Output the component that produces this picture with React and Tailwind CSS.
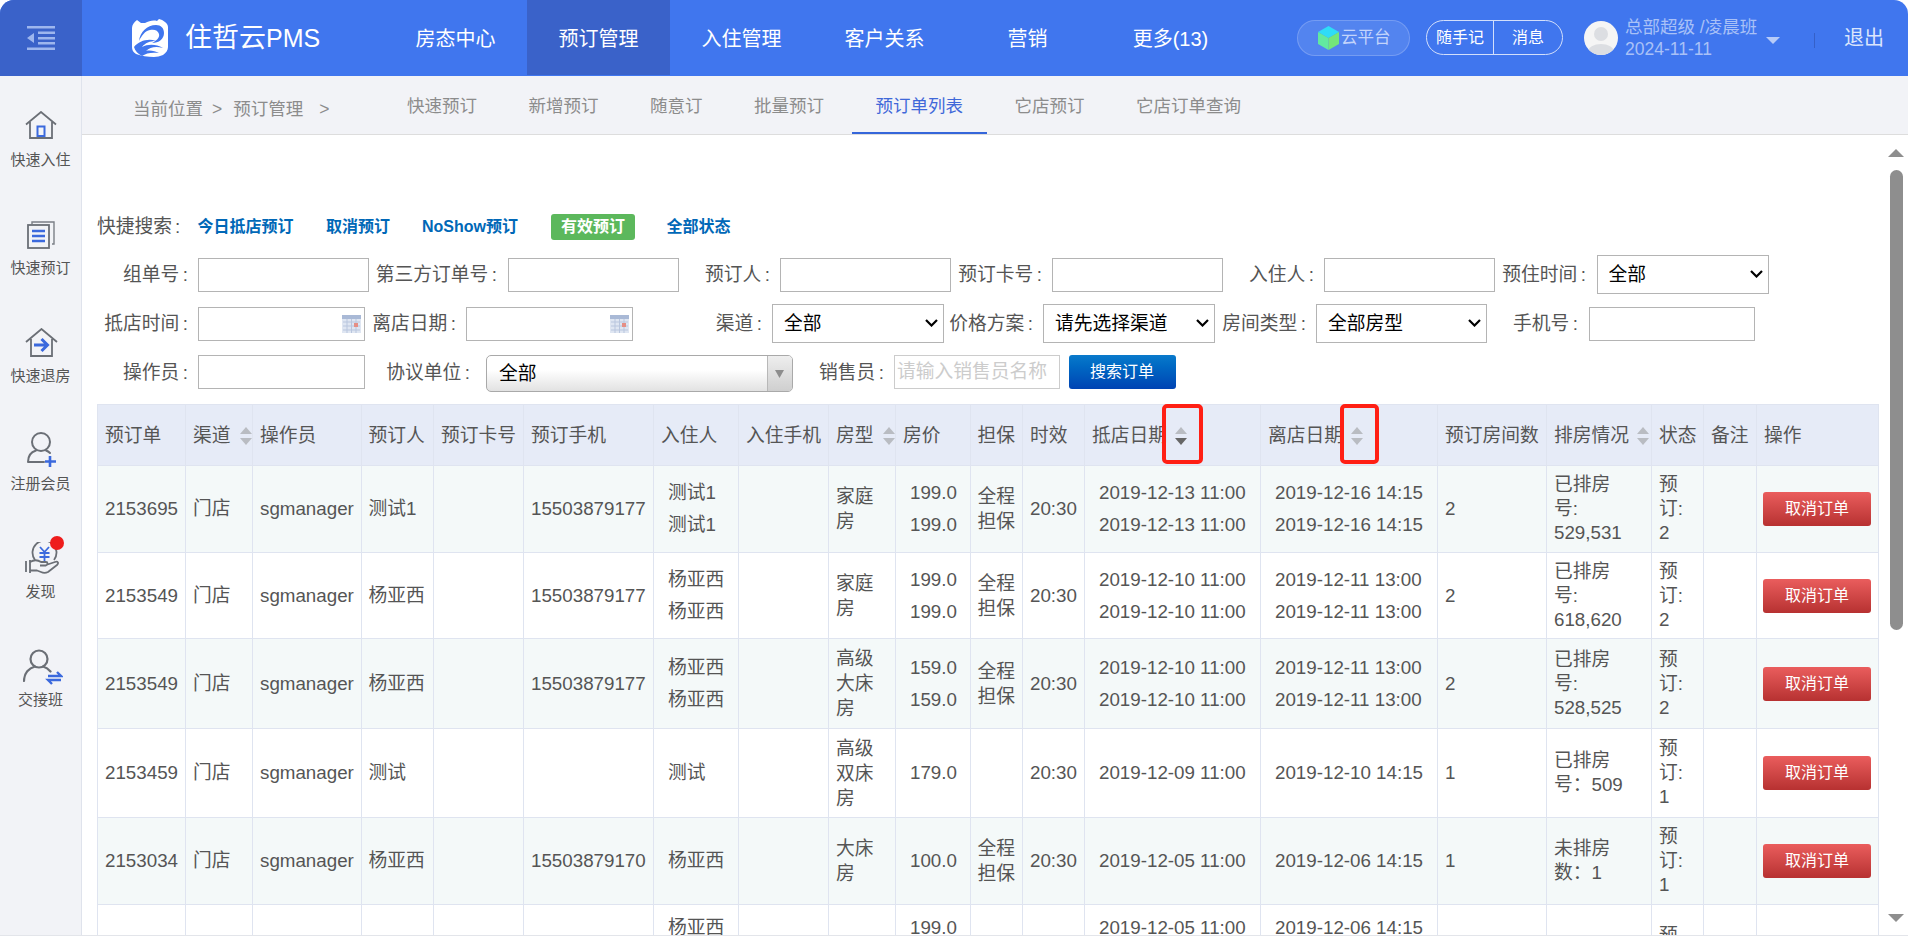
import React from 'react';

const NAV = ['房态中心', '预订管理', '入住管理', '客户关系', '营销', '更多(13)'];
const TABS = ['快速预订', '新增预订', '随意订', '批量预订', '预订单列表', '它店预订', '它店订单查询'];

function HomeIcon() {
  return (
    <svg width="32" height="28" viewBox="0 0 32 28" fill="none">
      <path d="M1 13.5 16 1l15 12.5M5 11v16h22V11" stroke="#6b6f76" strokeWidth="1.8" />
      <path d="M12.5 15.5h7V25h-7z" stroke="#3b69dd" strokeWidth="2" />
    </svg>
  );
}
function DocIcon() {
  return (
    <svg width="28" height="28" viewBox="0 0 28 28" fill="none">
      <path d="M5 3V1h22v22h-2" stroke="#7b7f86" strokeWidth="1.4" />
      <rect x="1" y="4" width="21" height="23" stroke="#6b6f76" strokeWidth="1.8" />
      <path d="M5 10h13M5 15h13M5 20h13" stroke="#3b69dd" strokeWidth="2.4" />
    </svg>
  );
}
function CheckoutIcon() {
  return (
    <svg width="33" height="29" viewBox="0 0 33 29" fill="none">
      <path d="M1 14 16.5 1 32 14M6 11v17h21V11" stroke="#6b6f76" strokeWidth="1.8" />
      <path d="M9 17h13M16.5 11l6 6-6 6" stroke="#3b69dd" strokeWidth="3" />
    </svg>
  );
}
function UserPlusIcon() {
  return (
    <svg width="29" height="35" viewBox="0 0 29 35" fill="none">
      <circle cx="14" cy="10" r="9" stroke="#6b6f76" strokeWidth="2" />
      <path d="M1 30c0-6 3-10 8-11.500M19 18.500c1.500.5 3 1.500 4 2.500M1 30h16" stroke="#6b6f76" strokeWidth="2" strokeLinecap="round" />
      <path d="M23 24v11M18 29.500h11" stroke="#3b69dd" strokeWidth="2.600" />
    </svg>
  );
}
function MoneyHandIcon() {
  return (
    <svg width="34" height="33" viewBox="0 0 34 33" fill="none">
      <path d="M10 18a12 12 0 1 1 19 0" stroke="#6b6f76" strokeWidth="1.800" />
      <path d="M15 5l4.500 5L24 5M14.500 11h10M14.500 15h10M19.500 10v9" stroke="#3b69dd" strokeWidth="1.800" />
      <path d="M1 19v11M5 18v13" stroke="#6b6f76" strokeWidth="1.800" />
      <path d="M5 20c5-3 8-2 11 0h5c2 0 2 3 0 3.500h-6M21 23l9-3c3-1 4 1 2 3l-9 7c-2 1-5 1-7 0l-4-1.500H5" stroke="#6b6f76" strokeWidth="1.800" strokeLinejoin="round" />
    </svg>
  );
}
function UserSwapIcon() {
  return (
    <svg width="40" height="36" viewBox="0 0 40 36" fill="none">
      <circle cx="16" cy="10" r="8.500" stroke="#6b6f76" strokeWidth="2.200" />
      <path d="M1 32c0-8 5-13 11-14.500M20 17.500c3 .8 5.500 2.500 7.500 5" stroke="#6b6f76" strokeWidth="2.200" strokeLinecap="round" />
      <path d="M25 27h13l-4-4M38 31H25l4 4" stroke="#3b69dd" strokeWidth="2.400" />
    </svg>
  );
}

const SIDE = [
  { label: '快速入住', icon: <HomeIcon />, box: 'h-[96px]', gap: 'mb-[9px]', x: '' },
  { label: '快速预订', icon: <DocIcon />, box: 'h-[108px]', gap: 'mb-[7px]', x: 'ml-[1px]' },
  { label: '快速退房', icon: <CheckoutIcon />, box: 'h-[108px]', gap: 'mb-[7px]', x: 'ml-[2px]' },
  { label: '注册会员', icon: <UserPlusIcon />, box: 'h-[108px]', gap: 'mb-[5px]', x: 'ml-[2px]' },
  { label: '发现', icon: <MoneyHandIcon />, box: 'h-[108px]', gap: 'mb-[5px]', x: 'ml-[2px]', dot: true },
  { label: '交接班', icon: <UserSwapIcon />, box: 'h-[108px]', gap: 'mb-[3px]', x: 'ml-[4px]' },
];

function SortIcon({ active, className }) {
  return (
    <svg width="12" height="18" viewBox="0 0 12 18" className={`shrink-0 ${className}`}>
      <path d="M6 0 12 7H0z" fill="#b9bcc2" />
      <path d="M0 11h12l-6 7z" fill={active ? '#666666' : '#b9bcc2'} />
    </svg>
  );
}

const COLS = [
  { t: '预订单', w: 'w-[88px]' },
  { t: '渠道', w: 'w-[67px]', sort: 'ml-[9px]' },
  { t: '操作员', w: 'w-[108.500px]' },
  { t: '预订人', w: 'w-[72.500px]' },
  { t: '预订卡号', w: 'w-[90px]' },
  { t: '预订手机', w: 'w-[130px]' },
  { t: '入住人', w: 'w-[85px]' },
  { t: '入住手机', w: 'w-[90px]' },
  { t: '房型', w: 'w-[67px]', sort: 'ml-[9px]' },
  { t: '房价', w: 'w-[74.500px]' },
  { t: '担保', w: 'w-[52.500px]' },
  { t: '时效', w: 'w-[62px]' },
  { t: '抵店日期', w: 'w-[176px]', sort: 'ml-[8px]', active: true, mark: 'left-[77px] w-[41px]' },
  { t: '离店日期', w: 'w-[177px]', sort: 'ml-[8px]', mark: 'left-[79px] w-[39px]' },
  { t: '预订房间数', w: 'w-[109px]' },
  { t: '排房情况', w: 'w-[105px]', sort: 'ml-[8px]' },
  { t: '状态', w: 'w-[52px]' },
  { t: '备注', w: 'w-[53px]' },
  { t: '操作', w: 'w-[122px]' },
];

const x2 = (v) => [v, v];
const x3 = (v) => [v, v, v];

const ROWS = [
  { h: 'h-[87px]', id: '2153695', op: '测试1', ph: '15503879177', guests: x2('测试1'), type: '家庭房', price: x2('199.0'), gua: '全程担保', inD: x2('2019-12-13 11:00'), outD: x2('2019-12-16 14:15'), n: '2', room: ['已排房', '号:', '529,531'], st: ['预', '订:', '2'] },
  { h: 'h-[86px]', id: '2153549', op: '杨亚西', ph: '15503879177', guests: x2('杨亚西'), type: '家庭房', price: x2('199.0'), gua: '全程担保', inD: x2('2019-12-10 11:00'), outD: x2('2019-12-11 13:00'), n: '2', room: ['已排房', '号:', '618,620'], st: ['预', '订:', '2'] },
  { h: 'h-[90px]', id: '2153549', op: '杨亚西', ph: '15503879177', guests: x2('杨亚西'), type: '高级大床房', price: x2('159.0'), gua: '全程担保', inD: x2('2019-12-10 11:00'), outD: x2('2019-12-11 13:00'), n: '2', room: ['已排房', '号:', '528,525'], st: ['预', '订:', '2'] },
  { h: 'h-[89px]', id: '2153459', op: '测试', ph: '', guests: ['测试'], type: '高级双床房', price: ['179.0'], gua: '', inD: ['2019-12-09 11:00'], outD: ['2019-12-10 14:15'], n: '1', room: ['已排房', '号：509'], st: ['预', '订:', '1'] },
  { h: 'h-[87px]', id: '2153034', op: '杨亚西', ph: '15503879170', guests: ['杨亚西'], type: '大床房', price: ['100.0'], gua: '全程担保', inD: ['2019-12-05 11:00'], outD: ['2019-12-06 14:15'], n: '1', room: ['未排房', '数：1'], st: ['预', '订:', '1'] },
  { h: 'h-[111px]', id: '2153034', op: '杨亚西', ph: '15503879170', guests: x3('杨亚西'), type: '大床房', price: x3('199.0'), gua: '全程担保', inD: x3('2019-12-05 11:00'), outD: x3('2019-12-06 14:15'), n: '3', room: ['未排房', '数：3'], st: ['预', '订:', '3'] },
];

const inputCls = 'h-[34px] bg-white border border-[#b4b4b4] outline-none';

function Label({ className, children }) {
  return <span className={`pt-[2px] text-right whitespace-nowrap ${className}`}>{children}<span className="ml-[3.500px]">:</span></span>;
}

function Select({ value, className }) {
  return (
    <div className={`relative h-[39px] ${className}`}>
      <select defaultValue={value} className="appearance-none w-full h-full block bg-white border border-[#b4b4b4] pl-[11px] pt-[1px] text-black outline-none">
        <option>{value}</option>
      </select>
      <svg width="13" height="8" viewBox="0 0 13 8" fill="none" className="absolute right-[6px] top-[15px] pointer-events-none">
        <path d="M1 1l5.500 5.500L12 1" stroke="#000000" strokeWidth="2.200" />
      </svg>
    </div>
  );
}

function CalendarIcon() {
  return (
    <svg width="19" height="18" viewBox="0 0 19 18" className="absolute right-[4px] top-[8px]">
      <rect width="19" height="18" fill="#dfe6f2" />
      <rect width="19" height="4" fill="#a9b9d6" />
      <path d="M1 7h17M1 11h17M1 15h17M5 4v14M9.500 4v14M14 4v14" stroke="#b9c6de" strokeWidth="1" />
      <rect x="12" y="8" width="4" height="4" fill="#e58f86" />
    </svg>
  );
}

function Lines({ items, className }) {
  return <td className={`border border-[#dfe4f0] pl-[14px] ${className || ''}`}>{items.map((v, i) => <div key={i} className="leading-[32px]">{v}</div>)}</td>;
}

function Cell({ children, className }) {
  return <td className={`border border-[#dfe4f0] px-[7px] leading-[24px] ${className || ''}`}>{children}</td>;
}

export default function App() {
  return (
    <div className="w-[1908px] h-[940px] overflow-hidden bg-white text-[#555555] font-['Liberation_Sans','Noto_Sans_CJK_SC',sans-serif]">
      <div className="h-[936px] flex flex-col overflow-hidden rounded-t-[14px] border-b border-[#e3e5ea]">
        {/* top bar */}
        <header className="h-[76px] shrink-0 flex bg-[#4076ee] text-white">
          <div className="w-[82px] bg-[#3a62c9] flex items-center justify-center">
            <svg width="28" height="24" viewBox="0 0 28 24" fill="#9db6ee">
              <path d="M0 0h28v2.500H0zM11 11h17v2.500H11zM11 5.500h17V8H11zM11 16h17v2.500H11zM0 21.500h28V24H0zM7 7v10l-7-5z" />
            </svg>
          </div>
          <div className="w-[302px] flex items-center pl-[49px]">
            <svg width="38" height="38" viewBox="0 0 38 38">
              <path d="M1 9C1 6 3 3 6 1l4 3h4c4-2 8-3 12-2l2-2c4 1 9 4 9 8v20c0 3-2 6-5 8-3 1-6 2-9 2-6 0-13-1-18-3-3-2-4-4-4-7z" fill="#ffffff" />
              <path d="M8 22C9 13 16 6 25 6c5 0 8 3 8 8 0 6-5 10-12 10 4-2 8-5 7-9-1-4-5-5-9-4-5 1-8 5-11 11z" fill="#4076ee" />
              <path d="M3 28c5-6 14-9 22-6-6 0-11 2-14 6 6-3 14-3 21 1-7-2-13-1-17 3 4-1 9 0 13 2-7-1-13 0-17 3-4-2-7-5-8-9z" fill="#4076ee" />
            </svg>
            <span className="ml-[16px] text-[27px] leading-none whitespace-nowrap">住哲云<span className="text-[25px]">PMS</span></span>
          </div>
          <nav className="flex">
            {NAV.map((n, i) => (
              <div key={n} className={`w-[143px] h-[75px] pt-[2px] flex items-center justify-center text-[20px] ${i === 1 ? 'bg-[#3a62c9]' : ''}`}>{n}</div>
            ))}
          </nav>
          <div className="ml-[55px] flex items-center">
            <div className="w-[113px] h-[36px] rounded-full bg-white/10 border border-white/20 flex items-center pl-[20px] gap-[2px] text-[16.500px] text-[#c3d4fb] -mt-[1px]">
              <svg width="21" height="24" viewBox="0 0 21 24">
                <path d="M10.500 0 21 6l-10.500 6L0 6z" fill="#2fdcf7" />
                <path d="M0 6l10.500 6v12L0 18z" fill="#62e9a0" />
                <path d="M21 6l-10.500 6v12L21 18z" fill="#74e67a" />
              </svg>
              云平台
            </div>
            <div className="ml-[16px] w-[137px] h-[35px] rounded-full border border-[#d3dffb] flex items-center text-[16px] -mt-[1px]">
              <span className="w-[67px] h-full flex items-center justify-center border-r border-[#d3dffb]">随手记</span>
              <span className="flex-1 text-center">消息</span>
            </div>
            <div className="ml-[21px] w-[34px] h-[34px] rounded-full bg-[#f5f5f5] overflow-hidden">
              <svg width="34" height="34" viewBox="0 0 34 34">
                <circle cx="17" cy="13" r="7" fill="#dcdee2" />
                <ellipse cx="17" cy="31" rx="13" ry="8" fill="#dcdee2" />
              </svg>
            </div>
            <div className="ml-[7px] w-[141px] text-[#a9c1f7] text-[17.500px] leading-[22px] whitespace-nowrap">
              <div>总部超级 /凌晨班</div>
              <div>2024-11-11</div>
            </div>
            <svg width="14" height="7" viewBox="0 0 14 7" className="mt-[4px]"><path d="M0 0h14L7 7z" fill="#b7cbf8" /></svg>
            <div className="ml-[34px] w-px h-[15px] bg-[#3560c8] mt-[4px]" />
            <span className="ml-[29px] text-[20px] text-[#dbe5fc]">退出</span>
          </div>
        </header>

        <div className="flex flex-1 min-h-0">
          {/* quick actions */}
          <aside className="w-[82px] shrink-0 bg-[#f2f3f7] border-r border-[#dfe3ec]">
            {SIDE.map((s) => (
              <div key={s.label} className={`flex flex-col items-center justify-end ${s.box}`}>
                <div className={`relative ${s.gap} ${s.x}`}>
                  {s.icon}
                  {s.dot && <span className="absolute -top-[6px] right-[-5px] w-[14px] h-[14px] rounded-full bg-[#ee1c1c]" />}
                </div>
                <div className="h-[24px] text-[15px] leading-[24px] text-[#555555]">{s.label}</div>
              </div>
            ))}
          </aside>

          <main className="flex-1 min-w-0 flex flex-col">
            <div className="h-[59px] shrink-0 flex bg-[#f2f3f7] border-b border-[#dddddd] text-[17.500px] text-[#8c8c8c]">
              <div className="w-[301px] flex items-center pl-[51px] pt-[9px] whitespace-nowrap">
                <span>当前位置</span>
                <span className="ml-[9px]">&gt;</span>
                <span className="ml-[11px]">预订管理</span>
                <span className="ml-[16px]">&gt;</span>
              </div>
              <div className="flex gap-[3.500px]">
                {TABS.map((t, i) => (
                  <div key={t} className={`h-[58px] px-[24px] flex items-center border-b-2 pt-[4px] ${i === 4 ? 'border-[#3566da] text-[#3f68d9]' : 'border-transparent'}`}>{t}</div>
                ))}
              </div>
            </div>

            <div className="flex-1 min-h-0 flex">
              <div className="w-[1806px] shrink-0 pl-[15px] pt-[79px] text-[18.750px] overflow-hidden">
                <div className="h-[26px] flex items-center font-bold text-[16px] text-[#0068b7] whitespace-nowrap">
                  <span className="w-[100.500px] text-[18.750px] font-normal text-[#555555]">快捷搜索<span className="ml-[3px]">:</span></span>
                  <span>今日抵店预订</span>
                  <span className="ml-[32.500px]">取消预订</span>
                  <span className="ml-[32px]">NoShow预订</span>
                  <span className="ml-[33px] w-[84px] h-[26px] rounded-[3px] bg-[#5cb85c] text-white flex items-center justify-center">有效预订</span>
                  <span className="ml-[31.500px]">全部状态</span>
                </div>

                <div className="mt-[15px] h-[39px] flex items-center">
                  <Label className="w-[91px]">组单号</Label>
                  <input className={`${inputCls} ml-[10px] w-[171px]`} />
                  <Label className="w-[128px]">第三方订单号</Label>
                  <input className={`${inputCls} ml-[11px] w-[171px]`} />
                  <Label className="w-[91px]">预订人</Label>
                  <input className={`${inputCls} ml-[10px] w-[171px]`} />
                  <Label className="w-[91px]">预订卡号</Label>
                  <input className={`${inputCls} ml-[10px] w-[170.500px]`} />
                  <Label className="w-[91.500px]">入住人</Label>
                  <input className={`${inputCls} ml-[10px] w-[171px]`} />
                  <Label className="w-[91px]">预住时间</Label>
                  <Select value="全部" className="ml-[10.500px] w-[172.500px]" />
                </div>

                <div className="mt-[10px] h-[39px] flex items-center">
                  <Label className="w-[91px]">抵店时间</Label>
                  <div className="relative ml-[10px] w-[167px]">
                    <input className={`${inputCls} w-full block border-[#8a8a8a]`} />
                    <CalendarIcon />
                  </div>
                  <Label className="w-[91px]">离店日期</Label>
                  <div className="relative ml-[10px] w-[167px]">
                    <input className={`${inputCls} w-full block border-[#8a8a8a]`} />
                    <CalendarIcon />
                  </div>
                  <Label className="w-[129px]">渠道</Label>
                  <Select value="全部" className="ml-[10px] w-[172px]" />
                  <Label className="w-[89px]">价格方案</Label>
                  <Select value="请先选择渠道" className="ml-[10px] w-[172px]" />
                  <Label className="w-[91px]">房间类型</Label>
                  <Select value="全部房型" className="ml-[10px] w-[171px]" />
                  <Label className="w-[91px]">手机号</Label>
                  <input className={`${inputCls} ml-[11px] w-[166px]`} />
                </div>

                <div className="mt-[12px] h-[37px] flex items-start">
                  <Label className="w-[91px] leading-[32px]">操作员</Label>
                  <input className={`${inputCls} ml-[10px] w-[167px]`} />
                  <Label className="w-[105px] leading-[32px]">协议单位</Label>
                  <div className="ml-[16px] w-[306.500px] h-[37px] flex rounded-[5px] border border-[#a9a9a9] overflow-hidden bg-gradient-to-b from-white from-40% to-[#e2e2e2] text-black">
                    <span className="flex-1 pl-[12px] leading-[35px]">全部</span>
                    <span className="w-[25px] border-l border-[#b8b8b8] bg-gradient-to-b from-[#eeeeee] to-[#cfcfcf] flex items-center justify-center">
                      <svg width="9" height="8" viewBox="0 0 9 8"><path d="M0 0h9L4.500 8z" fill="#8d8d8d" /></svg>
                    </span>
                  </div>
                  <Label className="w-[91.500px] leading-[32px]">销售员</Label>
                  <input placeholder="请输入销售员名称" className="h-[34px] ml-[10px] w-[166px] pl-[2px] bg-white border border-[#cccccc] outline-none placeholder:text-[#cccccc]" />
                  <button className="ml-[8.500px] w-[107px] h-[34px] rounded-[3px] bg-gradient-to-b from-[#0a7acb] to-[#0043b3] text-white text-[16px]">搜索订单</button>
                </div>

                <table className="mt-[12px] w-[1781px] table-fixed border-collapse">
                  <colgroup>
                    {COLS.map((c) => <col key={c.t} className={c.w} />)}
                  </colgroup>
                  <thead>
                    <tr className="h-[61px] bg-[#e6ebf7]">
                      {COLS.map((c) => (
                        <th key={c.t} className="relative border border-[#dfe4f0] px-[7px] pt-[2px] font-normal text-left whitespace-nowrap">
                          <div className="flex items-center">
                            <span>{c.t}</span>
                            {c.sort && <SortIcon active={c.active} className={c.sort} />}
                          </div>
                          {c.mark && <div className={`absolute -top-[1px] h-[60px] border-[4px] border-[#ff1f14] rounded-[5px] ${c.mark}`} />}
                        </th>
                      ))}
                    </tr>
                  </thead>
                  <tbody>
                    {ROWS.map((r, i) => (
                      <tr key={i} className={`${r.h} ${i % 2 === 0 ? 'bg-[#f4f9f9]' : 'bg-white'}`}>
                        <Cell>{r.id}</Cell>
                        <Cell>门店</Cell>
                        <Cell>sgmanager</Cell>
                        <Cell>{r.op}</Cell>
                        <Cell />
                        <Cell>{r.ph}</Cell>
                        <Lines items={r.guests} />
                        <Cell />
                        <Cell className="leading-[25px]">{r.type}</Cell>
                        <Lines items={r.price} />
                        <Cell className="leading-[25px] pr-[4px]">{r.gua}</Cell>
                        <Cell>20:30</Cell>
                        <Lines items={r.inD} />
                        <Lines items={r.outD} />
                        <Cell>{r.n}</Cell>
                        <Cell>{r.room.map((v) => <div key={v}>{v}</div>)}</Cell>
                        <Cell>{r.st.map((v) => <div key={v}>{v}</div>)}</Cell>
                        <Cell />
                        <td className="border border-[#dfe4f0] px-[6px]">
                          <button className="w-[108px] h-[34px] rounded-[3px] bg-gradient-to-b from-[#ea5d5d] to-[#b73131] text-white text-[16px]">取消订单</button>
                        </td>
                      </tr>
                    ))}
                  </tbody>
                </table>
              </div>

              {/* scrollbar */}
              <div className="w-[16px] shrink-0 flex flex-col items-center pt-[14px]">
                <svg width="16" height="8" viewBox="0 0 16 8"><path d="M8 0l8 8H0z" fill="#8e8e8e" /></svg>
                <div className="mt-[13px] w-[13px] h-[460px] rounded-full bg-[#8e8e8e]" />
                <svg width="16" height="8" viewBox="0 0 16 8" className="mt-[284px]"><path d="M0 0h16L8 8z" fill="#8e8e8e" /></svg>
              </div>
            </div>
          </main>
        </div>
      </div>
    </div>
  );
}
